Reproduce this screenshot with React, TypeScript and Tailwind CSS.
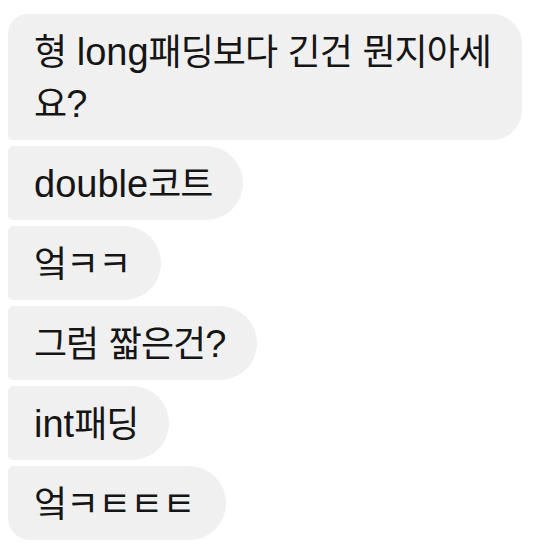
import { Fragment } from "react";

type Message = {
  lines: string[];
  shape: string;
};

const messages: Message[] = [
  {
    lines: ["형 long패딩보다 긴건 뭔지아세", "요?"],
    shape: "rounded-tl-[20px] rounded-bl-[5px] rounded-r-[30px]",
  },
  { lines: ["double코트"], shape: "rounded-l-[5px] rounded-r-[37px]" },
  { lines: ["엌ㅋㅋ"], shape: "rounded-l-[5px] rounded-r-[37px]" },
  { lines: ["그럼 짧은건?"], shape: "rounded-l-[5px] rounded-r-[37px]" },
  { lines: ["int패딩"], shape: "rounded-l-[5px] rounded-r-[37px]" },
  {
    lines: ["엌ㅋㅌㅌㅌ"],
    shape: "rounded-tl-[5px] rounded-bl-[22px] rounded-r-[37px]",
  },
];

// hangul runs get the CJK face, latin stays in Liberation Sans
const Line = ({ text }: { text: string }) => {
  const parts = text.split(/([가-힣ㄱ-ㅎㅏ-ㅣ]+)/);
  return (
    <>
      {parts.map((part, i) =>
        i % 2 === 1 ? (
          <span
            key={i}
            className="font-[Noto_Sans_CJK_KR,sans-serif] text-[36px] leading-none tracking-[-1px]"
          >
            {part}
          </span>
        ) : (
          <Fragment key={i}>{part}</Fragment>
        )
      )}
    </>
  );
};

export default function App() {
  return (
    <div className="min-h-screen bg-white pt-[14px] pl-2">
      <div className="flex flex-col items-start gap-[6px]">
        {messages.map((msg, index) => (
          <div
            key={index}
            className={`w-fit bg-[#f0f0f0] pl-[26px] pr-[31px] pt-3 pb-[10px] text-[38px] leading-[52px] text-[#151515] whitespace-nowrap font-[Liberation_Sans,Noto_Sans_CJK_KR,sans-serif] ${msg.shape}`}
          >
            {msg.lines.map((line, j) => (
              <div key={j}>
                <Line text={line} />
              </div>
            ))}
          </div>
        ))}
      </div>
    </div>
  );
}
